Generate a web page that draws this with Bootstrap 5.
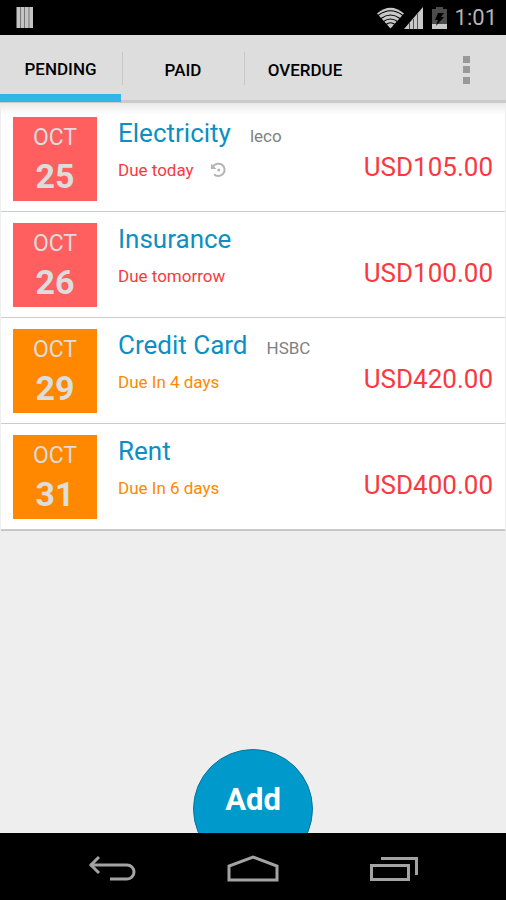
<!DOCTYPE html>
<html lang="en">
<head>
<meta charset="utf-8">
<meta name="viewport" content="width=device-width, initial-scale=1">
<title>Bills</title>
<link href="https://cdn.jsdelivr.net/npm/bootstrap@5.3.0/dist/css/bootstrap.min.css" rel="stylesheet">
<style>
  body { font-family: Roboto, "Liberation Sans", sans-serif; background: #eee; }
  .status-bar { height: 35px; background: #000; color: #b4b4b4; font-size: 22px; line-height: 36px; padding: 0 9px 0 16px; }
  .tab-bar { height: 68px; background: #ddd; border-bottom: 3px solid #cacaca; }
  .tab-bar .nav-item { width: 122px; height: 65px; position: relative; }
  .tab-bar .nav-item + .nav-item::before { content: ""; position: absolute; left: 0; top: 17px; height: 33px; width: 1px; background: #c8c8c8; }
  .tab-btn { width: 100%; height: 67px; border: 0; background: none; color: #000; font-size: 17px; line-height: 24px; font-weight: 500; padding: 2px 0 0; }
  .tab-btn.active { border-bottom: 8px solid #33b5e5; padding-top: 9px; width: 121px; }
  .menu-btn { border: 0; background: none; padding: 3px 35px 0; }
  .bill-list { margin: 0 1px; border-bottom: 1px solid #c4c4c4; background: linear-gradient(#e9e9e9, #fff 12px) #fff; padding-top: 3px; }
  .bill { height: 106px; padding: 11px 12px 10px 12px; border-bottom: 1px solid #ccc; }
  .date-box { width: 84px; height: 84px; color: #ddd; text-align: center; flex: none; }
  .date-month { font-size: 23px; line-height: 28px; padding-top: 7px; }
  .date-day { font-size: 34px; line-height: 40px; font-weight: 700; padding-top: 4px; }
  .soon .date-box { background: #ff5f5f; }
  .later .date-box { background: #ff8800; }
  .bill-name { font-size: 26px; line-height: 32px; color: #0d8fc4; }
  .bill-payee { font-size: 17px; line-height: 24px; color: #808080; margin-left: 19px; }
  .bill-due { font-size: 17px; line-height: 24px; margin-top: 9px; }
  .soon .bill-due { color: #f9393f; }
  .later .bill-due { color: #ff8800; }
  .bill-text { margin-left: 21px; }
  .bill-amount { font-size: 26px; line-height: 32px; color: #f9393f; padding-top: 34px; }
  .add-btn { width: 120px; height: 120px; margin-bottom: -36px; border: 1px solid #08759b; border-radius: 50%; background: #0099cc; color: #fff; font-size: 31px; font-weight: 700; line-height: 36px; padding: 0 0 19px; }
  .nav-bar { height: 67px; background: #000; padding: 0 56px; }
  .nav-btn { border: 0; background: none; padding: 4px 0 0; width: 112px; }
</style>
<script src="https://cdn.jsdelivr.net/npm/bootstrap@5.3.0/dist/js/bootstrap.bundle.min.js"></script>
</head>
<body class="d-flex flex-column min-vh-100">
<div class="status-bar d-flex align-items-center">
  <svg width="18" height="21" viewBox="0 0 18 21" aria-hidden="true"><path fill="#777" d="M1 0h16v21H1z"/><path fill="#c4c4c4" d="M.5 0h3.500v21H.5zM5 0h3v21H5zM9 0h3.500v21H9zM13.500 0H17v21h-3.500z"/></svg>
  <svg class="ms-auto" width="27" height="22" viewBox="0 0 27 22" aria-hidden="true"><path fill="#c8c8c8" d="M0 6.500Q13.500-5 27 6.500L13.500 21.500z"/><g fill="none" stroke="#000" stroke-width="1.200"><path d="M1 8.500Q13.500-1 26 8.500M4 11.500Q13.500 4.500 23 11.500M6.500 14.500Q13.500 9.500 20.500 14.500M9 17.500Q13.500 14 18 17.500"/></g></svg>
  <svg width="20" height="24" viewBox="0 0 20 24" aria-hidden="true"><path fill="#c8c8c8" d="M0 23L19 1v22z"/><path stroke="#555" d="M5.500 17v6M9.500 13v10M13.500 8v15"/></svg>
  <svg class="ms-2" width="15" height="24" viewBox="0 0 15 24" aria-hidden="true"><path fill="#4c4c4c" d="M4 1h7v2h4v20H0V3h4z"/><path fill="#c8c8c8" d="M0 18h15v5H0z"/><path fill="#000" d="M6 7h6l-3 4h3L4 20l2-6H3z"/></svg>
  <span class="ms-2">1:01</span>
</div>
<header class="tab-bar d-flex justify-content-between">
  <ul class="nav flex-nowrap" role="tablist">
    <li class="nav-item" role="presentation"><button class="tab-btn active" type="button" role="tab" aria-selected="true">PENDING</button></li>
    <li class="nav-item" role="presentation"><button class="tab-btn" type="button" role="tab" aria-selected="false">PAID</button></li>
    <li class="nav-item" role="presentation"><button class="tab-btn" type="button" role="tab" aria-selected="false">OVERDUE</button></li>
  </ul>
  <button class="menu-btn d-flex align-items-center" type="button" aria-label="More options">
    <svg width="9" height="29" viewBox="0 0 9 29"><path fill="#999" d="M1 1h7v7H1zM1 11h7v7H1zM1 22h7v7H1z"/></svg>
  </button>
</header>
<main class="flex-grow-1 d-flex flex-column overflow-hidden">
  <ul class="bill-list list-unstyled">
    <li class="bill soon d-flex">
      <div class="date-box"><div class="date-month">OCT</div><div class="date-day">25</div></div>
      <div class="bill-text flex-grow-1">
        <div class="d-flex align-items-baseline"><span class="bill-name">Electricity</span><span class="bill-payee">leco</span></div>
        <div class="bill-due d-flex align-items-center">Due today
          <svg class="ms-3" width="18" height="16" viewBox="0 0 18 16" role="img" aria-label="Repeats"><path fill="none" stroke="#b4b4b4" stroke-width="2" d="M3.200 4.500A6.200 6.200 0 1 1 4 12.200"/><path fill="#b4b4b4" d="M1 1.500V7h5.500z"/><circle cx="8.800" cy="8" r="1.500" fill="#b4b4b4"/></svg>
        </div>
      </div>
      <div class="bill-amount">USD105.00</div>
    </li>
    <li class="bill soon d-flex">
      <div class="date-box"><div class="date-month">OCT</div><div class="date-day">26</div></div>
      <div class="bill-text flex-grow-1">
        <div class="bill-name">Insurance</div>
        <div class="bill-due">Due tomorrow</div>
      </div>
      <div class="bill-amount">USD100.00</div>
    </li>
    <li class="bill later d-flex">
      <div class="date-box"><div class="date-month">OCT</div><div class="date-day">29</div></div>
      <div class="bill-text flex-grow-1">
        <div class="d-flex align-items-baseline"><span class="bill-name">Credit Card</span><span class="bill-payee">HSBC</span></div>
        <div class="bill-due">Due In 4 days</div>
      </div>
      <div class="bill-amount">USD420.00</div>
    </li>
    <li class="bill later d-flex">
      <div class="date-box"><div class="date-month">OCT</div><div class="date-day">31</div></div>
      <div class="bill-text flex-grow-1">
        <div class="bill-name">Rent</div>
        <div class="bill-due">Due In 6 days</div>
      </div>
      <div class="bill-amount">USD400.00</div>
    </li>
  </ul>
  <button class="add-btn mt-auto mx-auto flex-shrink-0" type="button">Add</button>
</main>
<nav class="nav-bar d-flex justify-content-between align-items-center" aria-label="System">
  <button class="nav-btn" type="button" aria-label="Back"><svg width="48" height="28" viewBox="0 0 48 28" fill="none" stroke="#a3a3a3" stroke-width="3"><path d="M2 10h37a7 7 0 0 1 0 14H22"/><path d="M11 2L3 10l8 8"/></svg></button>
  <button class="nav-btn" type="button" aria-label="Home"><svg width="52" height="28" viewBox="0 0 52 28" fill="none" stroke="#a3a3a3" stroke-width="3"><path d="M2 11v14h48V11L26 2z"/></svg></button>
  <button class="nav-btn" type="button" aria-label="Recent apps"><svg width="48" height="28" viewBox="0 0 48 28" fill="none" stroke="#a3a3a3" stroke-width="3"><path d="M1.500 10.500h37v14h-37zM11 3.500h35.500V20"/></svg></button>
</nav>
</body>
</html>
